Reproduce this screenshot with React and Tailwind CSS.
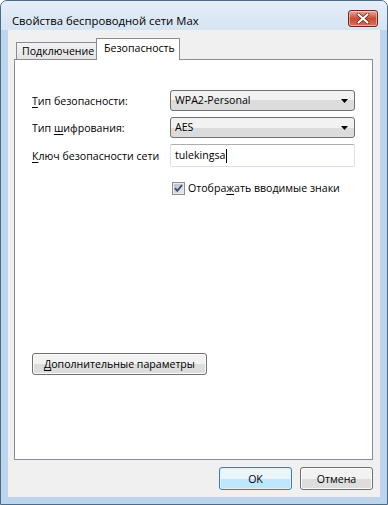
import React from "react";

function CloseButton() {
  return (
    <div className="w-[30px] h-[17px] mt-[9px] rounded-[3px] border border-[#6b2a20] bg-gradient-to-b from-[#e9a899] via-[#c84b33] to-[#d9705a] flex items-center justify-center shadow-[inset_0_0_0_1px_rgba(255,220,210,0.55)]">
      <svg width="14" height="11" viewBox="0 0 14 11">
        <path d="M2.5 1.5 L11.5 9.5 M11.5 1.5 L2.5 9.5" stroke="#5a1e16" strokeWidth="3.6" strokeLinecap="round" />
        <path d="M2.5 1.5 L11.5 9.5 M11.5 1.5 L2.5 9.5" stroke="#ffffff" strokeWidth="2.2" strokeLinecap="round" />
      </svg>
    </div>
  );
}

function Select({ value }) {
  return (
    <div className="h-[21px] w-[185px] rounded-[3px] border border-[#707070] bg-gradient-to-b from-[#f2f2f2] from-50% to-[#dcdcdc] to-50% flex items-center pl-[4px] pr-[6px]">
      <span className="flex-1 leading-none">{value}</span>
      <svg width="7" height="4" viewBox="0 0 7 4">
        <path d="M0 0 H7 L3.5 4 Z" fill="#000" />
      </svg>
    </div>
  );
}

function Checkbox() {
  return (
    <svg width="13" height="13" viewBox="0 0 13 13" className="shrink-0">
      <defs>
        <linearGradient id="cbg" x1="0" y1="0" x2="1" y2="1">
          <stop offset="0" stopColor="#b5bcc6" />
          <stop offset="1" stopColor="#eef0f3" />
        </linearGradient>
      </defs>
      <rect x="0.5" y="0.5" width="12" height="12" fill="#f4f4f4" stroke="#8e8f8f" />
      <rect x="2" y="2" width="9" height="9" fill="url(#cbg)" stroke="#c5cad2" strokeWidth="0.5" />
      <path d="M3 6.2 L5.3 8.8 L10 3" fill="none" stroke="#3a4d74" strokeWidth="1.9" />
    </svg>
  );
}

function Button({ children, primary, className = "" }) {
  return (
    <div
      className={
        "rounded-[3px] border flex items-center justify-center " +
        (primary
          ? "border-[#3c7fb1] bg-gradient-to-b from-[#eaf6fd] from-50% to-[#bee6fd] to-50% shadow-[inset_0_0_0_1px_#dff2fc] "
          : "border-[#707070] bg-gradient-to-b from-[#f2f2f2] from-50% to-[#dddddd] to-50% shadow-[inset_0_0_0_1px_#fbfbfb] ") +
        className
      }
    >
      {children}
    </div>
  );
}

export default function App() {
  return (
    <div className="w-[388px] h-[505px] bg-[#bcd4ec] border border-[#4d6a86] rounded-t-[7px] flex flex-col overflow-hidden font-['Open_Sans','Noto_Sans',sans-serif] text-[10.6px] leading-[16px] text-black">
      <div className="h-[29px] flex items-start pl-[11px] pr-[9px] bg-gradient-to-b from-[#e6eef7] to-[#d6e4f3]">
        <span className="flex-1 mt-[12px] text-[11.3px] leading-[16px]">Свойства беспроводной сети Max</span>
        <CloseButton />
      </div>
      <div className="mx-[7px] h-[467px] bg-[#f0f0f0] flex flex-col">
        <div className="h-[29px] pt-[8px] pl-[8px] flex items-end">
          <div className="w-[81px] h-[17px] border border-b-0 border-[#898c95] bg-gradient-to-b from-[#f2f2f2] to-[#e4e4e4] flex items-center pl-[5px] leading-none whitespace-nowrap">
            Подключение
          </div>
          <div className="w-[84px] h-[22px] -mb-px ml-[-1px] border border-b-0 border-[#898c95] bg-white flex items-center pl-[7px] pb-[3px] leading-none relative z-10 whitespace-nowrap">
            Безопасность
          </div>
        </div>
        <div className="ml-[6px] mr-[7px] h-[401px] border border-[#898c95] bg-white flex flex-col pl-[17px]">
          <div className="mt-[30px] flex items-center">
            <span className="w-[138px] whitespace-nowrap"><u className="underline-offset-[2px]">Т</u>ип безопасности:</span>
            <Select value="WPA2-Personal" />
          </div>
          <div className="mt-[6px] flex items-center">
            <span className="w-[138px] whitespace-nowrap">Тип <u className="underline-offset-[2px]">ш</u>ифрования:</span>
            <Select value="AES" />
          </div>
          <div className="mt-[6px] flex items-center">
            <span className="w-[138px] whitespace-nowrap"><u className="underline-offset-[2px]">К</u>люч безопасности сети</span>
            <div className="h-[23px] w-[185px] rounded-[2px] border border-[#dbdfe6] border-t-[#abadb3] bg-white flex items-center pl-[4px]">
              <span className="leading-none">tulekingsa</span>
              <span className="w-px h-[14px] bg-black ml-px" />
            </div>
          </div>
          <div className="mt-[13px] pl-[140px] flex items-center gap-[3px]">
            <Checkbox />
            <span className="whitespace-nowrap">Отобра<u className="underline-offset-[2px]">ж</u>ать вводимые знаки</span>
          </div>
          <div className="mt-[157px]">
            <Button className="w-[175px] h-[22px]">
              <span className="whitespace-nowrap"><u className="underline-offset-[2px]">Д</u>ополнительные параметры</span>
            </Button>
          </div>
        </div>
        <div className="mt-[7px] mr-[7px] flex justify-end gap-[8px]">
          <Button primary className="w-[73px] h-[23px]">OK</Button>
          <Button className="w-[73px] h-[23px]">Отмена</Button>
        </div>
      </div>
    </div>
  );
}
